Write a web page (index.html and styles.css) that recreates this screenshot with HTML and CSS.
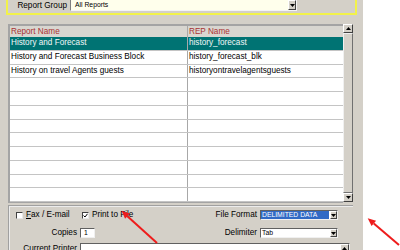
FILE: index.html
```html
<!DOCTYPE html>
<html>
<head>
<meta charset="utf-8">
<link rel="stylesheet" href="styles.css">
</head>
<body>
<div class="screen">
  <div class="window">
    <div class="group">
      <span class="grp-label">Report Group</span>
      <div class="combo">
        <span class="combo-val">All Reports</span>
        <span class="btn drop"><svg width="5" height="3" viewBox="0 0 5 3"><polygon points="0,0 5,0 2.5,3" fill="#000"/></svg></span>
      </div>
    </div>

    <div class="grid">
      <div class="table">
        <div class="row head"><div class="c1">Report Name</div><div class="c2">REP Name</div></div>
        <div class="row sel"><div class="c1">History and Forecast</div><div class="c2">history_forecast</div></div>
        <div class="row"><div class="c1">History and Forecast Business Block</div><div class="c2">history_forecast_blk</div></div>
        <div class="row"><div class="c1">History on travel Agents guests</div><div class="c2">historyontravelagentsguests</div></div>
        <div class="row"><div class="c1"></div><div class="c2"></div></div>
        <div class="row"><div class="c1"></div><div class="c2"></div></div>
        <div class="row"><div class="c1"></div><div class="c2"></div></div>
        <div class="row"><div class="c1"></div><div class="c2"></div></div>
        <div class="row"><div class="c1"></div><div class="c2"></div></div>
        <div class="row"><div class="c1"></div><div class="c2"></div></div>
        <div class="row"><div class="c1"></div><div class="c2"></div></div>
        <div class="row"><div class="c1"></div><div class="c2"></div></div>
        <div class="row"><div class="c1"></div><div class="c2"></div></div>
      </div>
      <div class="vscroll">
        <span class="btn sbtn"><svg width="5" height="3" viewBox="0 0 5 3"><polygon points="0,3 5,3 2.5,0" fill="#000"/></svg></span>
        <span class="thumb"></span>
        <span class="btn sbtn"><svg width="5" height="3" viewBox="0 0 5 3"><polygon points="0,0 5,0 2.5,3" fill="#000"/></svg></span>
      </div>
    </div>

    <div class="options">
      <div class="opt-row r1">
        <div class="chk-group fax">
          <span class="chk"></span>
          <span class="chk-label"><u>F</u>ax / E-mail</span>
        </div>
        <div class="chk-group print">
          <span class="chk"><svg width="5" height="5" viewBox="0 0 5 5"><polyline points="0.5,2.5 2,4 4.5,0.8" fill="none" stroke="#000" stroke-width="1"/></svg></span>
          <span class="chk-label">Print to File</span>
        </div>
        <span class="lbl ff">File Format</span>
        <div class="select">
          <span class="sel-val hl">DELIMITED DATA</span>
          <span class="btn drop"><svg width="5" height="3" viewBox="0 0 5 3"><polygon points="0,0 5,0 2.5,3" fill="#000"/></svg></span>
        </div>
      </div>
      <div class="opt-row r2">
        <span class="lbl left">Copies</span>
        <span class="field copies">1</span>
        <span class="lbl delim">Delimiter</span>
        <div class="select">
          <span class="sel-val">Tab</span>
          <span class="btn drop"><svg width="5" height="3" viewBox="0 0 5 3"><polygon points="0,0 5,0 2.5,3" fill="#000"/></svg></span>
        </div>
      </div>
      <div class="opt-row r3">
        <span class="lbl left">Current Printer</span>
        <div class="textarea">
          <span class="ta-body"></span>
          <span class="ta-scroll"><span class="btn sbtn"><svg width="5" height="3" viewBox="0 0 5 3"><polygon points="0,3 5,3 2.5,0" fill="#000"/></svg></span></span>
        </div>
      </div>
    </div>
  </div>

  <svg class="arrows" width="400" height="250" viewBox="0 0 400 250">
    <line x1="157" y1="243" x2="127.4" y2="216.2" stroke="#ee1c1c" stroke-width="2"/>
    <polygon points="121.5,210.8 129.8,213.6 125.1,218.8" fill="#ee1c1c"/>
    <line x1="399" y1="245" x2="373.8" y2="223.4" stroke="#ee1c1c" stroke-width="2"/>
    <polygon points="367.7,218.3 376.1,220.7 371.6,226.1" fill="#ee1c1c"/>
  </svg>
</div>
</body>
</html>
```

FILE: styles.css
```css
* {
  box-sizing: border-box;
  margin: 0;
  padding: 0;
}

html, body {
  width: 400px;
  height: 250px;
  overflow: hidden;
  background: #ffffff;
}

body {
  font-family: "Liberation Sans", Arial, sans-serif;
  font-size: 8.2px;
  color: #000;
}

.screen {
  position: relative;
  width: 400px;
  height: 250px;
}

.window {
  width: 363px;
  height: 250px;
  background: #d4d0c8;
  overflow: hidden;
}

/* ---------- top group box ---------- */
.group {
  margin: -4px 6px 0 6px;
  height: 19px;
  border: 2px solid #f2f24a;
  display: flex;
  align-items: flex-start;
}

.grp-label {
  width: 62px;
  text-align: right;
  padding-right: 3px;
  line-height: 12px;
  margin-top: 2px;
  white-space: nowrap;
}

.combo {
  width: 227px;
  height: 12px;
  margin-top: 1px;
  display: flex;
  background: #ffffec;
  border: 1px solid;
  border-color: #808080 #f4f4f4 #f4f4f4 #808080;
}

.combo-val {
  flex: 1;
  font-size: 6.8px;
  line-height: 10px;
  padding-left: 4px;
}

.btn {
  display: flex;
  align-items: center;
  justify-content: center;
  background: #d4d0c8;
  border: 1px solid;
  border-color: #ffffff #404040 #404040 #ffffff;
}

.btn svg {
  display: block;
}

.drop {
  width: 8px;
  height: 10px;
}

/* ---------- table ---------- */
.grid {
  margin: 9px 0 0 8px;
  width: 345px;
  display: flex;
  align-items: flex-start;
}

.table {
  width: 335px;
  background: #ffffff;
  border-top: 2px solid #a4a4a4;
  border-left: 2px solid #a4a4a4;
  border-bottom: 1px solid #a4a4a4;
}

.row {
  display: flex;
  height: 13.75px;
  border-bottom: 1px solid #c4c4c4;
  line-height: 12.75px;
  white-space: nowrap;
  overflow: hidden;
}

.row.head {
  height: 11px;
  line-height: 11px;
  background: #d8d6d0;
  color: #a83232;
  border-bottom: none;
}

.row.sel {
  background: #007373;
  color: #f2f8f8;
}

.c1 {
  width: 178px;
  padding-left: 1px;
  border-right: 1px solid #a8a8a8;
  overflow: hidden;
}

.c2 {
  flex: 1;
  padding-left: 1px;
  overflow: hidden;
}

.vscroll {
  width: 10px;
  height: 178px;
  display: flex;
  flex-direction: column;
}

.sbtn {
  width: 10px;
  height: 9px;
}

.thumb {
  flex: 1;
  background: #d4d0c8;
  border: 1px solid;
  border-color: #f0f0f0 #707070 #707070 #f0f0f0;
}

/* ---------- options panel ---------- */
.options {
  margin: 2px 0 0 8px;
  width: 345px;
  height: 60px;
  border-top: 1px solid #a0a0a0;
  border-left: 1px solid #a0a0a0;
  box-shadow: inset 1px 1px 0 #ececec;
}

.opt-row {
  display: flex;
  align-items: center;
  white-space: nowrap;
}

.r1 {
  margin-top: 4px;
  height: 10px;
}

.r2 {
  margin-top: 8px;
  height: 10px;
}

.r3 {
  margin-top: 5px;
  height: 14px;
  align-items: flex-start;
}

.chk-group {
  display: flex;
  align-items: center;
}

.fax {
  margin-left: 7px;
  width: 66px;
}

.print {
  width: 115px;
}

.chk {
  width: 7px;
  height: 7px;
  background: #ffffff;
  border: 1px solid;
  border-color: #404040 #e8e8e8 #e8e8e8 #404040;
  display: flex;
  align-items: center;
  justify-content: center;
}

.chk svg {
  display: block;
}

.chk-label {
  margin-left: 3px;
  line-height: 10px;
}

.lbl {
  text-align: right;
  line-height: 10px;
}

.ff {
  width: 60px;
  margin-right: 3px;
}

.left {
  width: 68px;
  margin-right: 3px;
}

.r3 .left {
  line-height: 12px;
}

.delim {
  width: 162px;
  margin-right: 3px;
}

.field {
  height: 10px;
  background: #ffffff;
  border: 1px solid;
  border-color: #606060 #f0f0f0 #f0f0f0 #606060;
  font-size: 6.8px;
  line-height: 8px;
}

.copies {
  width: 15px;
  padding-left: 3px;
}

.select {
  width: 78px;
  height: 10px;
  display: flex;
  background: #ffffff;
  border: 1px solid;
  border-color: #606060 #f0f0f0 #f0f0f0 #606060;
}

.select .drop {
  width: 7px;
  height: 8px;
}

.sel-val {
  flex: 1;
  font-size: 6.8px;
  line-height: 8px;
  padding-left: 1px;
  margin-right: 1px;
}

.sel-val.hl {
  background: #316ac5;
  color: #ffffff;
}

.textarea {
  width: 270px;
  height: 14px;
  display: flex;
  background: #ffffff;
  border: 1px solid;
  border-color: #606060 #f0f0f0 #f0f0f0 #606060;
}

.ta-body {
  flex: 1;
}

.ta-scroll {
  width: 9px;
  background: #d4d0c8;
  display: flex;
  flex-direction: column;
}

.ta-scroll .sbtn {
  width: 9px;
  height: 9px;
}

/* ---------- annotation arrows ---------- */
.arrows {
  position: absolute;
  left: 0;
  top: 0;
  pointer-events: none;
}
```
